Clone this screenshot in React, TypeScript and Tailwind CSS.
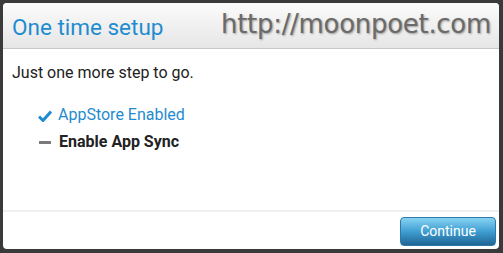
import React from "react";

export default function App() {
  return (
    <div className="w-[503px] h-[253px] bg-[#3a3a3a] pt-[3px] pl-[3px] pr-[4px] pb-[4px]" style={{ fontFamily: "Roboto, 'Liberation Sans', sans-serif" }}>
      <div className="w-full h-full bg-white rounded-[4px] flex flex-col overflow-hidden">
        <div className="h-[46px] shrink-0 bg-gradient-to-b from-[#fbfbfb] to-[#e6e6e6] border-b border-[#c8c8c8] flex items-center justify-between pl-[9px] pr-[8px]">
          <span className="text-[22.5px] text-[#1f8ccf] mt-[5px]">One time setup</span>
          <span
            className="text-[26px] text-[#6a6a6a] tracking-[-0.3px] -mt-[2px]"
            style={{ fontFamily: "'DejaVu Sans', Verdana, sans-serif", textShadow: "1px 1px 2px rgba(0,0,0,0.35)" }}
          >
            http://moonpoet.com
          </span>
        </div>
        <div className="flex-1 flex flex-col pl-[9px] pt-[12px]">
          <div className="text-[16px] text-[#222]">Just one more step to go.</div>
          <div className="flex flex-col pl-[26px] mt-[18px] gap-[3px]">
            <div className="flex items-center gap-[6px]">
              <svg width="14" height="12" viewBox="0 0 14 12" className="mt-[1px]">
                <path d="M1 6.5 L5 10.5 L13 1.5" stroke="#1f8ccf" strokeWidth="3" fill="none" strokeLinejoin="miter" />
              </svg>
              <span className="text-[16px] text-[#1f8ccf]">AppStore Enabled</span>
            </div>
            <div className="flex items-center gap-[8px]">
              <span className="w-[12px] h-[3px] bg-[#7a7a7a] ml-[1px]" />
              <span className="text-[16px] font-bold text-[#222]">Enable App Sync</span>
            </div>
          </div>
        </div>
        <div className="h-[39px] shrink-0 border-t-2 border-[#efefef] flex items-center justify-end pr-[3px] pt-[1px]">
          <button className="w-[96px] h-[29px] rounded-[4px] bg-gradient-to-b from-[#86d3f2] via-[#3f9ed2] to-[#1f6696] text-white text-[14px] border border-[#2d7aa8]">
            Continue
          </button>
        </div>
      </div>
    </div>
  );
}
